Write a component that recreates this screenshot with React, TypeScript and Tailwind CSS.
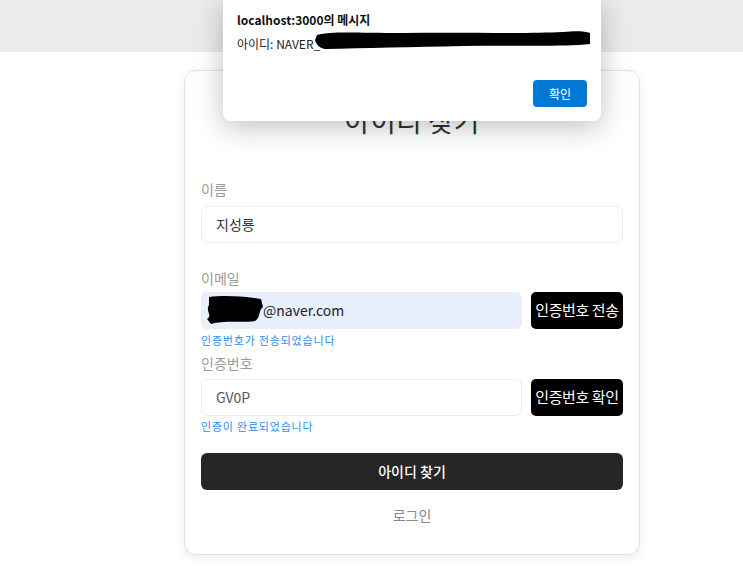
import { ReactNode } from 'react'

const font = { fontFamily: '"Noto Sans CJK KR", "Noto Sans", sans-serif' }

function Label({ children }: { children: ReactNode }) {
  return <div className="text-[14px] leading-[20px] text-[#9a9a9a]">{children}</div>
}

function Field({ value, className = '' }: { value: ReactNode; className?: string }) {
  return (
    <div className={`h-[37px] rounded-[6px] border border-[#ececec] flex items-center px-[14px] text-[14px] ${className}`}>
      {value}
    </div>
  )
}

function BlackButton({ children }: { children: ReactNode }) {
  return (
    <button className="h-[37px] w-[92px] shrink-0 rounded-[5px] bg-black text-white text-[15px] tracking-[-0.4px] whitespace-nowrap">
      {children}
    </button>
  )
}

export default function App() {
  return (
    <div className="relative min-h-[588px] bg-white overflow-hidden" style={font}>
      <div className="h-[52px] bg-[#ebebeb]" />

      <div className="flex mt-[18px] pl-[184px]">
        <div className="w-[456px] rounded-[12px] border border-[#e2e2e2] bg-white shadow-[0_3px_10px_rgba(0,0,0,0.08)] px-[16px] pt-[31px] pb-[29px]">
          <h1 className="text-center text-[28px] leading-[36px] text-[#333]">아이디 찾기</h1>

          <div className="mt-[41px]">
            <Label>이름</Label>
            <Field value="지성룡" className="mt-[7px] text-[#333]" />
          </div>

          <div className="mt-[25px]">
            <Label>이메일</Label>
            <div className="mt-[4px] flex gap-[9px]">
              <div className="relative flex-1">
                <Field value={<span className="pl-[47px]">@naver.com</span>} className="bg-[#e8f0fe] border-[#e8f0fe] text-[#222]" />
                <svg className="absolute left-[2px] top-[1px]" width="62" height="32" viewBox="0 0 62 32">
                  <path d="M6 4 C20 2 40 3 58 6 L60 14 C55 18 58 24 52 28 C40 30 20 27 8 31 L4 26 C10 22 2 18 6 12 Z" fill="#000" />
                </svg>
              </div>
              <BlackButton>인증번호 전송</BlackButton>
            </div>
            <div className="mt-[4px] text-[11px] leading-[14px] tracking-[0.8px] text-[#2e8ef0]">인증번호가 전송되었습니다</div>
          </div>

          <div className="mt-[6px]">
            <Label>인증번호</Label>
            <div className="mt-[6px] flex gap-[9px]">
              <Field value="GV0P" className="flex-1 text-[#555]" />
              <BlackButton>인증번호 확인</BlackButton>
            </div>
            <div className="mt-[3px] text-[11px] leading-[14px] tracking-[0.8px] text-[#2e8ef0]">인증이 완료되었습니다</div>
          </div>

          <button className="mt-[20px] w-full h-[37px] rounded-[6px] bg-[#262626] text-white text-[14px] font-medium">
            아이디 찾기
          </button>

          <div className="mt-[15px] text-center text-[14px] leading-[20px] text-[#888]">로그인</div>
        </div>
      </div>

      <div className="absolute left-[223px] top-0 w-[378px] h-[121px] rounded-b-[8px] bg-white shadow-[0_6px_28px_rgba(0,0,0,0.25)] px-[14px] pt-[11px]">
        <div className="text-[12px] leading-[18px] font-bold text-[#111]">
          localhost:3000의 메시지
        </div>
        <div className="relative mt-[6px] text-[12px] leading-[18px] text-[#222]">
          아이디: NAVER_
          <svg className="absolute left-[76px] top-[-5px]" width="278" height="20" viewBox="0 0 278 20">
            <path d="M4 5 C20 1 40 3 90 3 C150 2 210 4 250 2 C262 1 272 1 277 3 L277 14 C250 17 200 15 150 16 C100 17 50 18 12 19 C6 18 3 14 2 10 Z" fill="#000" />
          </svg>
        </div>
        <div className="flex justify-end mt-[27px]">
          <button className="w-[54px] h-[27px] rounded-[4px] bg-[#0078d4] text-white text-[12px]">확인</button>
        </div>
      </div>
    </div>
  )
}
